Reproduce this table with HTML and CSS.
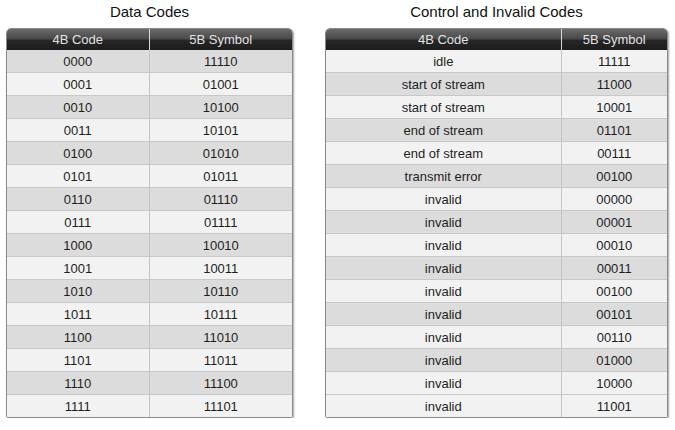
FILE: index.html
```html
<!DOCTYPE html>
<html>
<head>
<meta charset="utf-8">
<link rel="stylesheet" href="styles.css">
</head>
<body>
<div class="page">
  <section class="panel panel-data">
    <h2 class="title">Data Codes</h2>
    <div class="card">
      <table class="codes">
        <colgroup><col class="c1"><col class="c2"></colgroup>
        <thead><tr><th>4B Code</th><th>5B Symbol</th></tr></thead>
        <tbody>
          <tr class="dark"><td>0000</td><td>11110</td></tr>
          <tr class="light"><td>0001</td><td>01001</td></tr>
          <tr class="dark"><td>0010</td><td>10100</td></tr>
          <tr class="light"><td>0011</td><td>10101</td></tr>
          <tr class="dark"><td>0100</td><td>01010</td></tr>
          <tr class="light"><td>0101</td><td>01011</td></tr>
          <tr class="dark"><td>0110</td><td>01110</td></tr>
          <tr class="light"><td>0111</td><td>01111</td></tr>
          <tr class="dark"><td>1000</td><td>10010</td></tr>
          <tr class="light"><td>1001</td><td>10011</td></tr>
          <tr class="dark"><td>1010</td><td>10110</td></tr>
          <tr class="light"><td>1011</td><td>10111</td></tr>
          <tr class="dark"><td>1100</td><td>11010</td></tr>
          <tr class="light"><td>1101</td><td>11011</td></tr>
          <tr class="dark"><td>1110</td><td>11100</td></tr>
          <tr class="light"><td>1111</td><td>11101</td></tr>
        </tbody>
      </table>
    </div>
  </section>
  <section class="panel panel-ctrl">
    <h2 class="title">Control and Invalid Codes</h2>
    <div class="card">
      <table class="codes">
        <colgroup><col class="c1"><col class="c2"></colgroup>
        <thead><tr><th>4B Code</th><th>5B Symbol</th></tr></thead>
        <tbody>
          <tr class="light"><td>idle</td><td>11111</td></tr>
          <tr class="dark"><td>start of stream</td><td>11000</td></tr>
          <tr class="light"><td>start of stream</td><td>10001</td></tr>
          <tr class="dark"><td>end of stream</td><td>01101</td></tr>
          <tr class="light"><td>end of stream</td><td>00111</td></tr>
          <tr class="dark"><td>transmit error</td><td>00100</td></tr>
          <tr class="light"><td>invalid</td><td>00000</td></tr>
          <tr class="dark"><td>invalid</td><td>00001</td></tr>
          <tr class="light"><td>invalid</td><td>00010</td></tr>
          <tr class="dark"><td>invalid</td><td>00011</td></tr>
          <tr class="light"><td>invalid</td><td>00100</td></tr>
          <tr class="dark"><td>invalid</td><td>00101</td></tr>
          <tr class="light"><td>invalid</td><td>00110</td></tr>
          <tr class="dark"><td>invalid</td><td>01000</td></tr>
          <tr class="light"><td>invalid</td><td>10000</td></tr>
          <tr class="light"><td>invalid</td><td>11001</td></tr>
        </tbody>
      </table>
    </div>
  </section>
</div>
</body>
</html>
```
FILE: styles.css
```css
html, body {
  margin: 0;
  padding: 0;
  background: #ffffff;
}
body {
  font-family: "Liberation Sans", Arial, sans-serif;
  color: #1e1e1e;
}
.page {
  display: flex;
  gap: 32px;
  padding-left: 6px;
}
.panel {
  display: flex;
  flex-direction: column;
}
.panel-data { width: 287px; }
.panel-ctrl { width: 343px; }
.title {
  margin: 0;
  height: 28px;
  line-height: 24px;
  font-size: 15px;
  font-weight: normal;
  text-align: center;
  color: #111;
}
.card {
  border: 1px solid #8a8a8a;
  border-radius: 5px 5px 2px 2px;
  overflow: hidden;
  box-shadow: 1px 1px 2px rgba(0,0,0,0.35);
}
.codes {
  width: 100%;
  border-collapse: collapse;
  table-layout: fixed;
  font-size: 13px;
}
.panel-data .c1 { width: 142px; }
.panel-ctrl .c1 { width: 235px; }
.codes th {
  height: 21px;
  padding: 0;
  font-weight: normal;
  color: #e2e2e2;
  background: linear-gradient(#6a6a6a 0%, #4a4a4a 45%, #262626 55%, #1c1c1c 100%);
  text-align: center;
}
.codes th + th {
  border-left: 1px solid #d8d8d8;
}
.codes td {
  height: 22px;
  padding: 0;
  text-align: center;
  border-top: 1px solid #c8c8c8;
}
.codes td + td {
  border-left: 1px solid #c4c4c4;
}
.codes tbody tr:first-child td {
  border-top: none;
}
.dark td { background: #dcdcdc; }
.light td { background: #f2f2f2; }
```
